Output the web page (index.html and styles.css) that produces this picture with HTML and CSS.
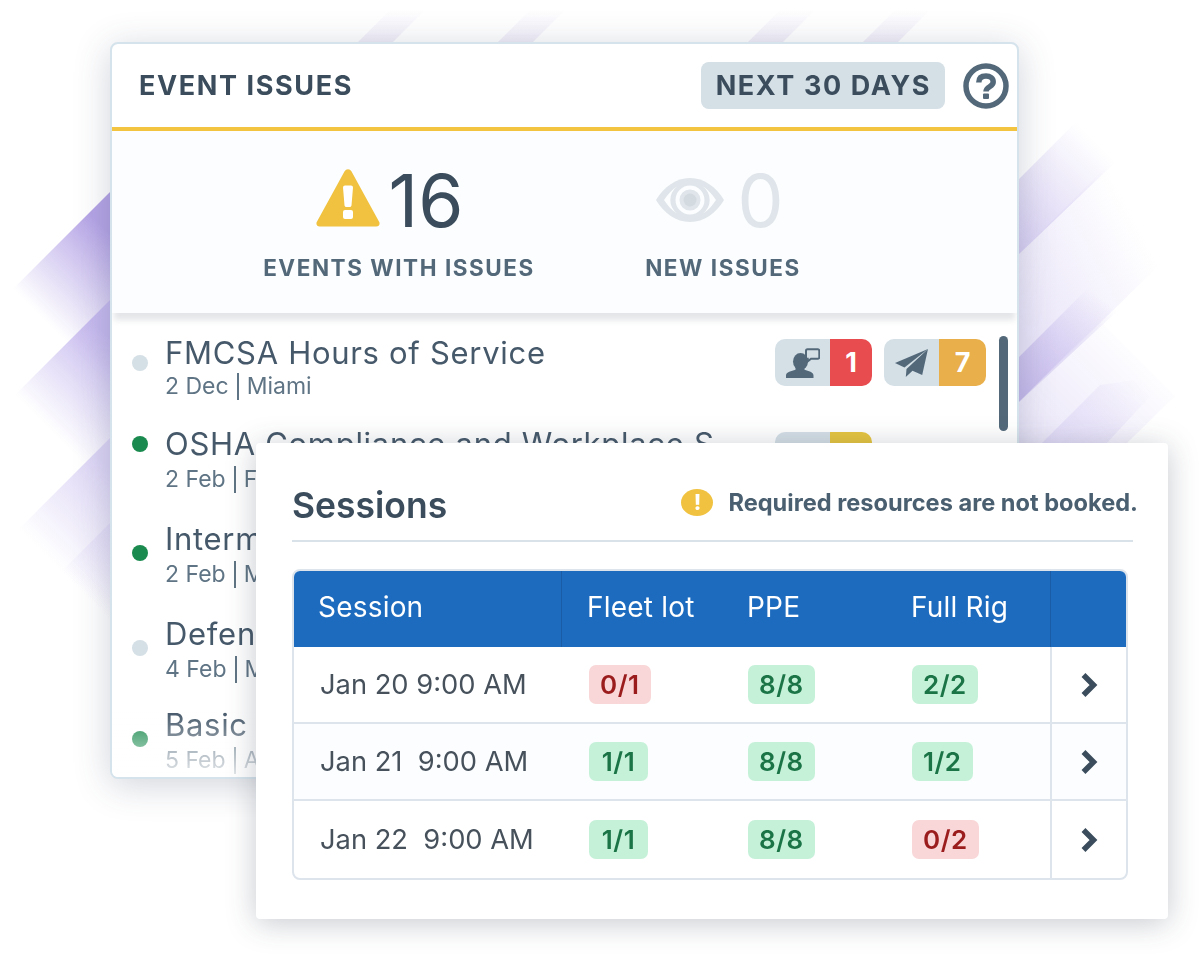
FILE: index.html
```html
<!DOCTYPE html>
<html lang="en">
<head>
    <meta charset="UTF-8">
    <title>Event Issues</title>
    <link rel="stylesheet" href="styles.css">
</head>
<body>
    <div class="stage">
        <!-- purple stripes behind the cards -->
        <svg class="stripes" width="1200" height="955" viewBox="0 0 1200 955" aria-hidden="true">
            <defs>
                <linearGradient id="l1" gradientUnits="userSpaceOnUse" x1="112" y1="236" x2="36" y2="312">
                    <stop offset="0" stop-color="#b5a4e6"/><stop offset="1" stop-color="#b5a4e6" stop-opacity="0"/>
                </linearGradient>
                <linearGradient id="l2" gradientUnits="userSpaceOnUse" x1="112" y1="340" x2="36" y2="416">
                    <stop offset="0" stop-color="#c6b9ee"/><stop offset="1" stop-color="#c6b9ee" stop-opacity="0"/>
                </linearGradient>
                <linearGradient id="l3" gradientUnits="userSpaceOnUse" x1="112" y1="470" x2="36" y2="546">
                    <stop offset="0" stop-color="#dcd4f5"/><stop offset="1" stop-color="#dcd4f5" stop-opacity="0"/>
                </linearGradient>
                <linearGradient id="r1" gradientUnits="userSpaceOnUse" x1="1016" y1="250" x2="1110" y2="156">
                    <stop offset="0" stop-color="#d6cdf2"/><stop offset="1" stop-color="#d6cdf2" stop-opacity="0"/>
                </linearGradient>
                <linearGradient id="r2" gradientUnits="userSpaceOnUse" x1="1016" y1="320" x2="1150" y2="250">
                    <stop offset="0" stop-color="#e9e4f9"/><stop offset="1" stop-color="#e9e4f9" stop-opacity="0"/>
                </linearGradient>
                <linearGradient id="r3" gradientUnits="userSpaceOnUse" x1="1016" y1="390" x2="1090" y2="290">
                    <stop offset="0" stop-color="#c6baec"/><stop offset="1" stop-color="#c6baec" stop-opacity="0"/>
                </linearGradient>
                <linearGradient id="r4" gradientUnits="userSpaceOnUse" x1="1040" y1="445" x2="1125" y2="365">
                    <stop offset="0" stop-color="#e0d9f6"/><stop offset="1" stop-color="#e0d9f6" stop-opacity="0"/>
                </linearGradient>
                <linearGradient id="r5" gradientUnits="userSpaceOnUse" x1="1016" y1="445" x2="1130" y2="331">
                    <stop offset="0" stop-color="#e9e4f9"/><stop offset="1" stop-color="#e9e4f9" stop-opacity="0"/>
                </linearGradient>
                <linearGradient id="t1" gradientUnits="userSpaceOnUse" x1="0" y1="45" x2="0" y2="10">
                    <stop offset="0" stop-color="#eeebf7"/><stop offset="1" stop-color="#eeebf7" stop-opacity="0"/>
                </linearGradient>
            </defs>
            <polygon fill="url(#l1)" points="112,190 5,297 112,404"/>
            <polygon fill="url(#l2)" points="112,298 5,405 112,512"/>
            <polygon fill="url(#l3)" points="112,436 5,543 112,650"/>
            <polygon fill="url(#l3)" points="112,521 5,628 112,735"/>
            <polygon fill="url(#r2)" points="1016,257 1110,163 1185,240 1016,405"/>
            <polygon fill="url(#r1)" points="1016,182 1085,113 1125,153 1016,257"/>
            <polygon fill="url(#r3)" points="1016,360 1095,281 1140,290 1016,405"/>
            <polygon fill="url(#r5)" points="1016,405 1100,321 1175,396 1125,445 1016,445"/>
            <polygon fill="url(#r4)" points="1040,445 1100,385 1170,375 1105,445"/>
            <polygon fill="url(#t1)" points="355,45 395,5 430,5 390,45"/>
            <polygon fill="url(#t1)" points="495,45 535,5 570,5 530,45"/>
            <polygon fill="url(#t1)" points="745,45 785,5 820,5 780,45"/>
            <polygon fill="url(#t1)" points="860,45 900,5 935,5 895,45"/>
        </svg>

        <!-- back card -->
        <section class="card issues">
            <header class="issues-head">
                <h2 class="issues-title">EVENT ISSUES</h2>
                <span class="range">NEXT 30 DAYS</span>
                <svg class="help" width="46" height="46" viewBox="0 0 46 46">
                    <circle cx="23" cy="23" r="20" fill="none" stroke="#53697a" stroke-width="5.500"/>
                    <path d="M15.800 19.500c0-5 3.300-6.500 7.200-6.500 4.200 0 7.200 2.300 7.200 6 0 5-7.200 4.500-7.200 9.500" fill="none" stroke="#53697a" stroke-width="5.500"/>
                    <rect x="20" y="30.500" width="6" height="5.600" rx="1" fill="#53697a"/>
                </svg>
            </header>

            <div class="stats">
                <div class="stat stat-events">
                    <div class="stat-value">
                        <svg class="warn-icon" width="64" height="58" viewBox="0 0 64 58">
                            <path d="M28.600 2.200a3.900 3.900 0 0 1 6.800 0l27.700 50.600c1.300 2.200-.2 4.700-2.800 4.700H3.700c-2.600 0-4.100-2.500-2.800-4.700z" fill="#f0c23f"/>
                            <path d="M27 18.500a2 2 0 0 1 2-2h6a2 2 0 0 1 2 2l-1.500 18a2 2 0 0 1-2 1.500h-3a2 2 0 0 1-2-1.500z" fill="#fff"/>
                            <rect x="27" y="41" width="10" height="9" rx="2" fill="#fff"/>
                        </svg>
                        <span class="stat-num">16</span>
                    </div>
                    <div class="stat-label">EVENTS WITH ISSUES</div>
                </div>
                <div class="stat stat-new">
                    <div class="stat-value">
                        <svg class="eye-icon" width="70" height="46" viewBox="0 0 70 46">
                            <path d="M1 23C9 10 21 1 35 1s26 9 34 22c-8 13-20 22-34 22S9 36 1 23z" fill="#dfe5ea"/>
                            <path d="M9 23c4-6 8-10.500 13-13.500a17 17 0 0 0 0 27C17 33.500 13 29 9 23zm52 0c-4 6-8 10.500-13 13.500a17 17 0 0 0 0-27c5 3 9 7.500 13 13.500z" fill="#fbfdfe"/>
                            <circle cx="35" cy="23" r="12.500" fill="none" stroke="#fbfdfe" stroke-width="4"/>
                            <circle cx="35" cy="23" r="6.500" fill="#d3dbe1"/>
                        </svg>
                        <span class="stat-num stat-num-off">0</span>
                    </div>
                    <div class="stat-label">NEW ISSUES</div>
                </div>
            </div>

            <div class="events">
                <div class="event event-1">
                    <span class="dot dot-off dot-low"></span>
                    <div class="event-text">
                        <div class="event-name">FMCSA Hours of Service</div>
                        <div class="event-sub">2 Dec <i class="bar"></i> Miami</div>
                    </div>
                    <div class="event-tags">
                        <div class="tag">
                            <span class="tag-icon">
                                <svg width="34" height="30" viewBox="0 0 34 30">
                                    <ellipse cx="14.500" cy="13.500" rx="7.500" ry="8.500" fill="#53697a"/>
                                    <path d="M0 30v-2.500c0-3.500 5.500-4.500 9.500-5.800V19h9v2.700c4 1.300 9 2.300 9 5.800V30z" fill="#53697a"/>
                                    <path d="M21.500 1.200h10.300a1.500 1.500 0 0 1 1.500 1.500v6.600a1.500 1.500 0 0 1-1.500 1.500h-6.800l-3.300 2.700v-2.700h-.2A1.500 1.500 0 0 1 20 9.300V2.700a1.500 1.500 0 0 1 1.500-1.500z" fill="#d4dfe6" stroke="#53697a" stroke-width="2"/>
                                </svg>
                            </span>
                            <span class="tag-count count-red">1</span>
                        </div>
                        <div class="tag">
                            <span class="tag-icon">
                                <svg width="34" height="28" viewBox="0 0 34 28">
                                    <path d="M33 0 0 14l9.500 4.500L33 0z" fill="#53697a"/>
                                    <path d="M33 0 11.500 20 10.800 28l6.700-6.200 9.700 4.200z" fill="#53697a"/>
                                </svg>
                            </span>
                            <span class="tag-count count-amber">7</span>
                        </div>
                    </div>
                    <span class="scroll-thumb"></span>
                </div>
                <div class="event event-2">
                    <span class="dot dot-on"></span>
                    <div class="event-text">
                        <div class="event-name">OSHA Compliance and Workplace S</div>
                        <div class="event-sub">2 Feb <i class="bar"></i> F</div>
                    </div>
                    <div class="event-tags">
                        <div class="tag">
                            <span class="tag-icon"></span>
                            <span class="tag-count count-yellow"></span>
                        </div>
                    </div>
                </div>
                <div class="event event-3">
                    <span class="dot dot-on dot-lower"></span>
                    <div class="event-text">
                        <div class="event-name">Intermediate</div>
                        <div class="event-sub">2 Feb <i class="bar"></i> M</div>
                    </div>
                </div>
                <div class="event event-4">
                    <span class="dot dot-off dot-lower"></span>
                    <div class="event-text">
                        <div class="event-name">Defensive</div>
                        <div class="event-sub">4 Feb <i class="bar"></i> M</div>
                    </div>
                </div>
                <div class="event event-5">
                    <span class="dot dot-on dot-lower"></span>
                    <div class="event-text">
                        <div class="event-name">Basic</div>
                        <div class="event-sub">5 Feb <i class="bar"></i> A</div>
                    </div>
                </div>
                <div class="events-fade"></div>
            </div>
        </section>

        <!-- front card -->
        <section class="card sessions">
            <header class="sessions-head">
                <h2 class="sessions-title">Sessions</h2>
                <div class="notice">
                    <span class="notice-icon">!</span>
                    <span>Required resources are not booked.</span>
                </div>
            </header>

            <div class="table">
                <div class="row row-head">
                    <div class="cell cell-name">Session</div>
                    <div class="cell">Fleet lot</div>
                    <div class="cell">PPE</div>
                    <div class="cell">Full Rig</div>
                    <div class="cell cell-go"></div>
                </div>
                <div class="row">
                    <div class="cell cell-name">Jan 20 9:00 AM</div>
                    <div class="cell"><span class="pill pill-bad">0/1</span></div>
                    <div class="cell"><span class="pill">8/8</span></div>
                    <div class="cell"><span class="pill">2/2</span></div>
                    <div class="cell cell-go"><svg class="chev" width="18" height="26" viewBox="0 0 18 26"><path d="M3.500 3l10 10-10 10" fill="none" stroke="#3b4d5c" stroke-width="5.500"/></svg></div>
                </div>
                <div class="row row-alt">
                    <div class="cell cell-name">Jan 21&nbsp; 9:00 AM</div>
                    <div class="cell"><span class="pill">1/1</span></div>
                    <div class="cell"><span class="pill">8/8</span></div>
                    <div class="cell"><span class="pill">1/2</span></div>
                    <div class="cell cell-go"><svg class="chev" width="18" height="26" viewBox="0 0 18 26"><path d="M3.500 3l10 10-10 10" fill="none" stroke="#3b4d5c" stroke-width="5.500"/></svg></div>
                </div>
                <div class="row row-last">
                    <div class="cell cell-name">Jan 22&nbsp; 9:00 AM</div>
                    <div class="cell"><span class="pill">1/1</span></div>
                    <div class="cell"><span class="pill">8/8</span></div>
                    <div class="cell"><span class="pill pill-bad">0/2</span></div>
                    <div class="cell cell-go"><svg class="chev" width="18" height="26" viewBox="0 0 18 26"><path d="M3.500 3l10 10-10 10" fill="none" stroke="#3b4d5c" stroke-width="5.500"/></svg></div>
                </div>
            </div>
        </section>
    </div>
</body>
</html>
```

FILE: styles.css
```css
html, body {
    margin: 0;
    padding: 0;
    background: #fff;
}

body {
    font-family: Inter, "Liberation Sans", sans-serif;
    color: #3b4d5c;
}

.stage {
    position: relative;
    width: 1200px;
    height: 955px;
    overflow: hidden;
    filter: blur(0.4px);
}

.stripes {
    position: absolute;
    top: 0;
    left: 0;
}

.card {
    position: absolute;
    box-sizing: border-box;
    background: #fff;
}

/* Event issues card */
.issues {
    top: 42px;
    left: 110px;
    width: 909px;
    height: 737px;
    border: 2px solid #d5e3ec;
    border-radius: 8px;
    overflow: hidden;
    box-shadow: 0 6px 36px rgba(60, 70, 100, 0.24);
}

.issues-head {
    display: flex;
    align-items: center;
    height: 83px;
    padding: 0 8px 0 27px;
    border-bottom: 4px solid #f2c43f;
}

.issues-title {
    flex: 1;
    margin: 0;
    font-size: 27px;
    font-weight: 700;
    letter-spacing: 1.6px;
    color: #3b4d5c;
}

.range {
    height: 47px;
    line-height: 47px;
    padding: 0 14px 0 15px;
    margin-right: 18px;
    background: #d4dfe6;
    border-radius: 8px;
    font-size: 27px;
    font-weight: 700;
    letter-spacing: 1.6px;
    color: #3b4d5c;
}

.stats {
    position: relative;
    z-index: 1;
    height: 182px;
    background: #fbfdfe;
    box-shadow: 0 9px 6px -2px rgba(80, 95, 110, 0.16);
}

.stat {
    position: absolute;
    top: 37px;
    display: flex;
    flex-direction: column;
    align-items: center;
}

.stat-events { left: 151px; width: 272px; }
.stat-new { left: 533px; width: 156px; }

.stat-value {
    display: flex;
    align-items: center;
    gap: 9px;
    height: 62px;
}

.stat-events .stat-value { padding-right: 19px; }
.stat-new .stat-value { gap: 12px; padding-right: 7px; }

.warn-icon { margin-top: -3px; }
.eye-icon { margin-top: 2px; }

.stat-num {
    margin-top: 3px;
    font-size: 73px;
    font-weight: 400;
    line-height: 62px;
    color: #3b4d5c;
}

.stat-num-off { color: #dfe5ea; }

.stat-label {
    margin-top: 24px;
    font-size: 22.5px;
    font-weight: 700;
    letter-spacing: 1.55px;
    white-space: nowrap;
    color: #53697a;
}

/* Event list */
.events {
    position: relative;
    height: 468px;
    padding: 21px 0 0 20px;
    overflow: hidden;
}

.event {
    position: relative;
    display: flex;
    align-items: flex-start;
    height: 95px;
}

.event-1 { height: 91px; }
.event-4 { height: 91px; }

.event-2 .event-sub,
.event-3 .event-sub,
.event-4 .event-sub,
.event-5 .event-sub {
    margin-top: 2px;
}

.dot {
    flex: none;
    width: 16px;
    height: 16px;
    margin: 11px 17px 0 0;
    border-radius: 50%;
}

.dot-off { background: #d4dfe6; }
.dot-on { background: #1a8a4e; }
.dot-low { margin-top: 21px; }
.dot-lower { margin-top: 25px; }

.event-name {
    font-size: 31px;
    line-height: 38px;
    letter-spacing: 0.7px;
    white-space: nowrap;
    color: #46596a;
}

.event-sub {
    display: flex;
    align-items: center;
    gap: 8px;
    font-size: 23px;
    line-height: 28px;
    white-space: nowrap;
    color: #5f7484;
}

.bar {
    width: 2px;
    height: 27px;
    background: #5f7484;
}

.event-tags {
    position: absolute;
    top: 5px;
    left: 643px;
    display: flex;
    gap: 12px;
}

.event-2 .event-tags { top: 7px; }

.tag {
    display: flex;
    height: 47px;
    border-radius: 10px;
    overflow: hidden;
}

.tag-icon {
    display: flex;
    align-items: center;
    justify-content: center;
    width: 55px;
    background: #d4dfe6;
}

.tag-count {
    display: flex;
    align-items: center;
    justify-content: center;
    width: 42px;
    font-size: 27px;
    font-weight: 700;
    color: #fff;
}

.tag:nth-child(2) .tag-count { width: 47px; }

.count-red { background: #e84c4f; }
.count-amber { background: #e8af4a; }
.count-yellow { background: #e6c53f; }

.scroll-thumb {
    position: absolute;
    top: 2px;
    left: 867px;
    width: 9px;
    height: 95px;
    border-radius: 5px;
    background: #53697a;
}

.events-fade {
    position: absolute;
    left: 0;
    right: 0;
    bottom: 0;
    height: 90px;
    background: linear-gradient(to bottom, rgba(255, 255, 255, 0), #fff 85%);
}

/* Sessions card */
.sessions {
    top: 443px;
    left: 256px;
    width: 912px;
    height: 476px;
    padding: 0 35px 0 36px;
    border-radius: 4px;
    box-shadow: 0 4px 30px rgba(50, 60, 80, 0.28);
}

.sessions-head {
    display: flex;
    align-items: center;
    justify-content: space-between;
    height: 69px;
    padding-top: 28px;
    border-bottom: 2px solid #d8e2e8;
}

.sessions-title {
    margin: 0;
    font-size: 35.5px;
    font-weight: 600;
    color: #3b4d5c;
}

.notice {
    display: flex;
    align-items: center;
    gap: 15px;
    margin: -6px -5px 0 0;
    font-size: 23.6px;
    font-weight: 700;
    color: #4a5f70;
}

.notice-icon {
    display: flex;
    align-items: center;
    justify-content: center;
    width: 32px;
    height: 27px;
    border-radius: 50%;
    background: #f0c23f;
    font-size: 21px;
    font-weight: 800;
    color: #fff;
}

.table {
    box-sizing: border-box;
    width: 836px;
    height: 311px;
    margin-top: 27px;
    border: 2px solid #dde4ec;
    border-radius: 8px;
    overflow: hidden;
}

.row {
    display: grid;
    grid-template-columns: 268px 159px 164px 165px 1fr;
    height: 77px;
    border-bottom: 2px solid #dde4ec;
    box-sizing: border-box;
}

.row-alt { background: #fbfdfe; }
.row-last { border-bottom: 0; }

.row-head {
    grid-template-columns: 270px 160px 164px 164px 1fr;
    height: 78px;
    margin: -2px -2px 0;
    border-bottom: 0;
    background: #1c6bbf;
    color: #fff;
}

.row-head .cell {
    padding-bottom: 2px;
    font-size: 28px;
    letter-spacing: 0.2px;
    color: #fff;
}

.row-head .cell-name { padding-left: 26px; border-right: 1px solid #1a5da6; }
.row-head .cell-go { border-left: 1px solid #1a5da6; }
.row-head .cell:nth-child(n+2) { padding-left: 25px; }

.cell {
    display: flex;
    align-items: center;
    padding-left: 27px;
    font-size: 27.3px;
    color: #46515c;
    white-space: nowrap;
}

.cell-name { padding-left: 26px; }

.cell-go {
    justify-content: center;
    padding: 0;
    border-left: 2px solid #dde4ec;
}

.pill {
    box-sizing: border-box;
    min-width: 59px;
    height: 39px;
    line-height: 39px;
    padding: 0 11px;
    border-radius: 7px;
    background: #c6f1d9;
    font-size: 26px;
    font-weight: 600;
    letter-spacing: 0.5px;
    text-align: center;
    color: #1a7446;
}

.pill-bad {
    background: #f9d7d8;
    color: #9b1c1c;
}
```
